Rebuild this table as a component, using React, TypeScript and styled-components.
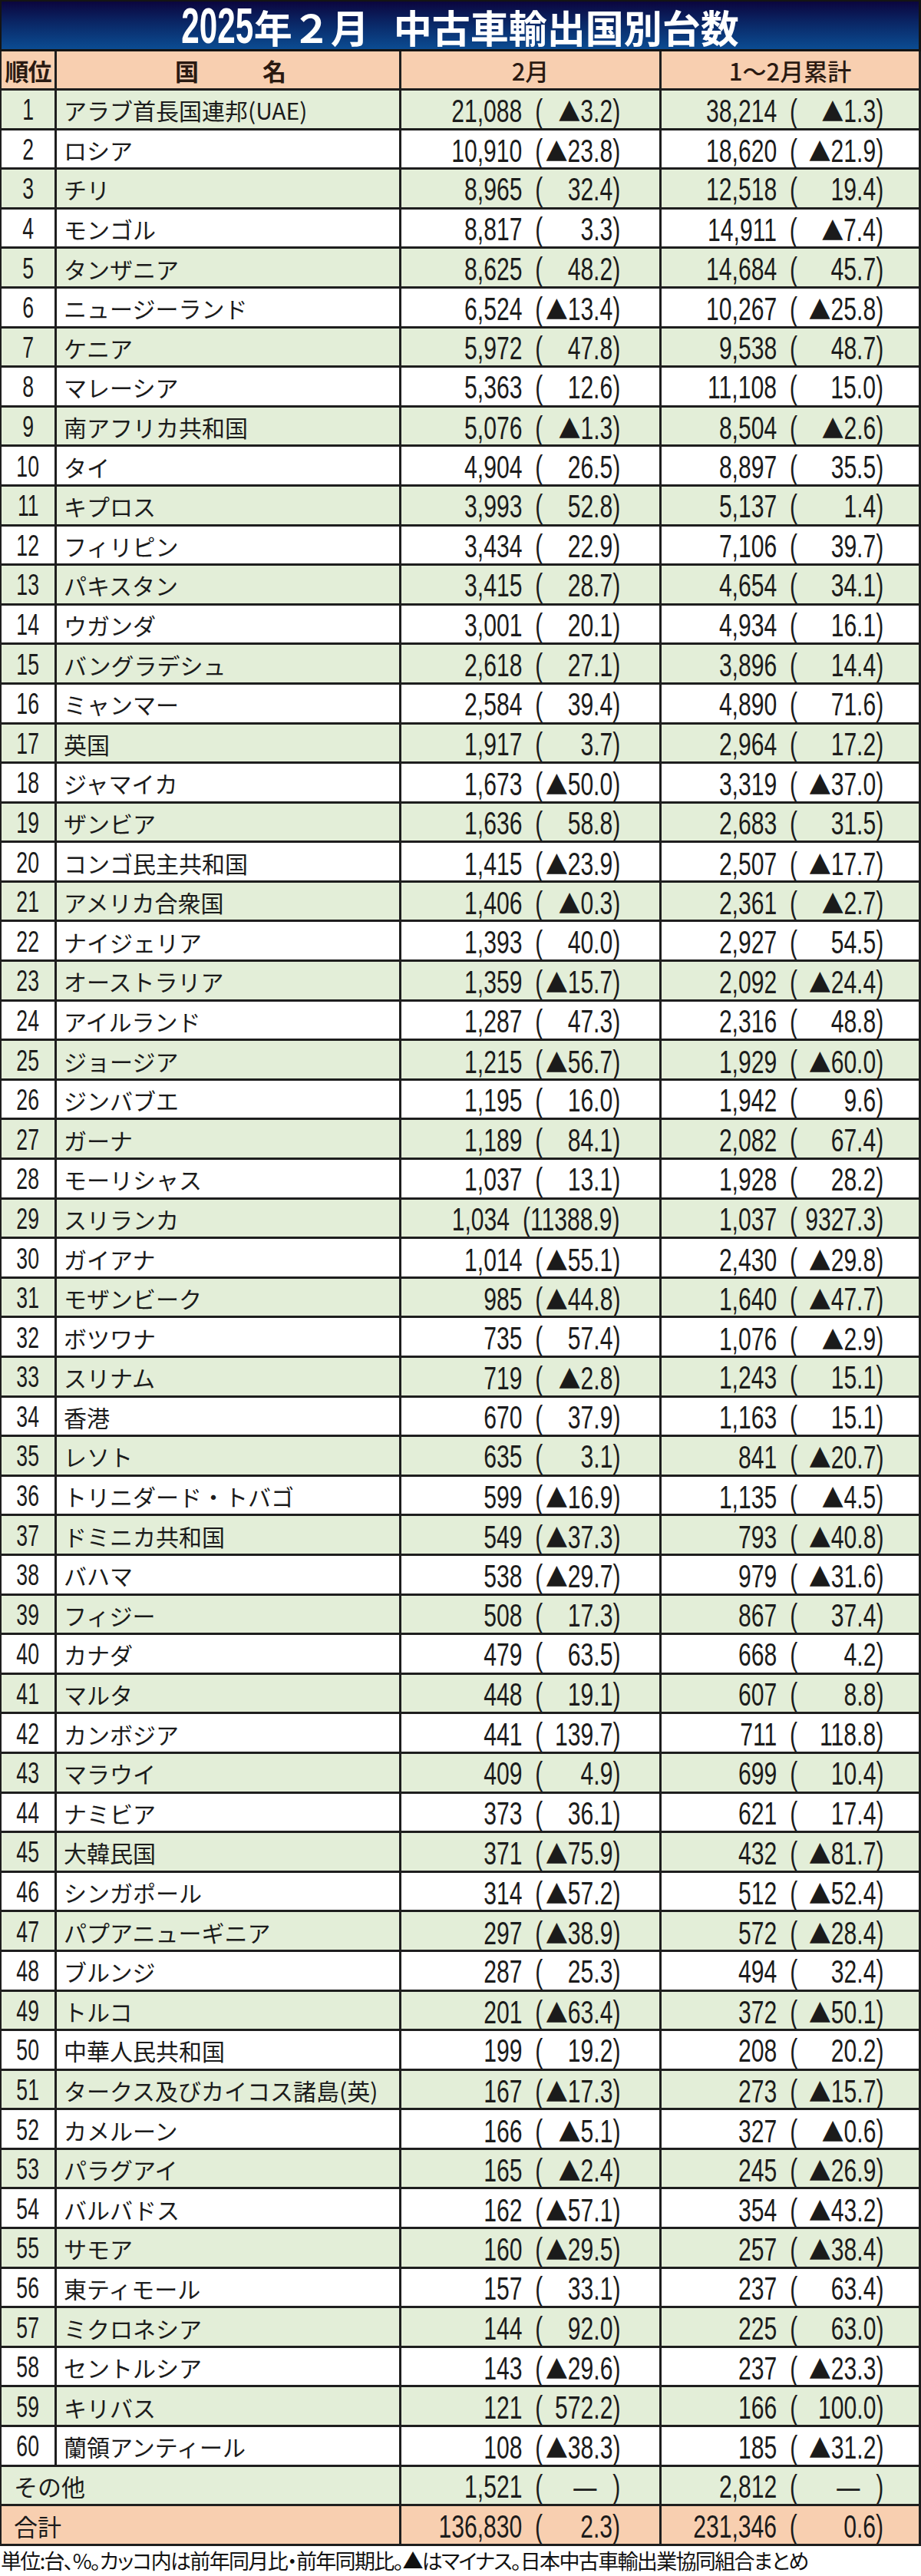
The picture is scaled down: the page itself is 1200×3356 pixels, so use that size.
import React from "react";
import styled, { createGlobalStyle } from "styled-components";

type Line = [string, string, string, string, string];

// name, 2月台数, 前年同月比, 1~2月累計, 前年同期比
const countries: Line[] = [
  ["アラブ首長国連邦(UAE)", "21,088", "▲3.2", "38,214", "▲1.3"],
  ["ロシア", "10,910", "▲23.8", "18,620", "▲21.9"],
  ["チリ", "8,965", "32.4", "12,518", "19.4"],
  ["モンゴル", "8,817", "3.3", "14,911", "▲7.4"],
  ["タンザニア", "8,625", "48.2", "14,684", "45.7"],
  ["ニュージーランド", "6,524", "▲13.4", "10,267", "▲25.8"],
  ["ケニア", "5,972", "47.8", "9,538", "48.7"],
  ["マレーシア", "5,363", "12.6", "11,108", "15.0"],
  ["南アフリカ共和国", "5,076", "▲1.3", "8,504", "▲2.6"],
  ["タイ", "4,904", "26.5", "8,897", "35.5"],
  ["キプロス", "3,993", "52.8", "5,137", "1.4"],
  ["フィリピン", "3,434", "22.9", "7,106", "39.7"],
  ["パキスタン", "3,415", "28.7", "4,654", "34.1"],
  ["ウガンダ", "3,001", "20.1", "4,934", "16.1"],
  ["バングラデシュ", "2,618", "27.1", "3,896", "14.4"],
  ["ミャンマー", "2,584", "39.4", "4,890", "71.6"],
  ["英国", "1,917", "3.7", "2,964", "17.2"],
  ["ジャマイカ", "1,673", "▲50.0", "3,319", "▲37.0"],
  ["ザンビア", "1,636", "58.8", "2,683", "31.5"],
  ["コンゴ民主共和国", "1,415", "▲23.9", "2,507", "▲17.7"],
  ["アメリカ合衆国", "1,406", "▲0.3", "2,361", "▲2.7"],
  ["ナイジェリア", "1,393", "40.0", "2,927", "54.5"],
  ["オーストラリア", "1,359", "▲15.7", "2,092", "▲24.4"],
  ["アイルランド", "1,287", "47.3", "2,316", "48.8"],
  ["ジョージア", "1,215", "▲56.7", "1,929", "▲60.0"],
  ["ジンバブエ", "1,195", "16.0", "1,942", "9.6"],
  ["ガーナ", "1,189", "84.1", "2,082", "67.4"],
  ["モーリシャス", "1,037", "13.1", "1,928", "28.2"],
  ["スリランカ", "1,034", "11388.9", "1,037", "9327.3"],
  ["ガイアナ", "1,014", "▲55.1", "2,430", "▲29.8"],
  ["モザンビーク", "985", "▲44.8", "1,640", "▲47.7"],
  ["ボツワナ", "735", "57.4", "1,076", "▲2.9"],
  ["スリナム", "719", "▲2.8", "1,243", "15.1"],
  ["香港", "670", "37.9", "1,163", "15.1"],
  ["レソト", "635", "3.1", "841", "▲20.7"],
  ["トリニダード・トバゴ", "599", "▲16.9", "1,135", "▲4.5"],
  ["ドミニカ共和国", "549", "▲37.3", "793", "▲40.8"],
  ["バハマ", "538", "▲29.7", "979", "▲31.6"],
  ["フィジー", "508", "17.3", "867", "37.4"],
  ["カナダ", "479", "63.5", "668", "4.2"],
  ["マルタ", "448", "19.1", "607", "8.8"],
  ["カンボジア", "441", "139.7", "711", "118.8"],
  ["マラウイ", "409", "4.9", "699", "10.4"],
  ["ナミビア", "373", "36.1", "621", "17.4"],
  ["大韓民国", "371", "▲75.9", "432", "▲81.7"],
  ["シンガポール", "314", "▲57.2", "512", "▲52.4"],
  ["パプアニューギニア", "297", "▲38.9", "572", "▲28.4"],
  ["ブルンジ", "287", "25.3", "494", "32.4"],
  ["トルコ", "201", "▲63.4", "372", "▲50.1"],
  ["中華人民共和国", "199", "19.2", "208", "20.2"],
  ["タークス及びカイコス諸島(英)", "167", "▲17.3", "273", "▲15.7"],
  ["カメルーン", "166", "▲5.1", "327", "▲0.6"],
  ["パラグアイ", "165", "▲2.4", "245", "▲26.9"],
  ["バルバドス", "162", "▲57.1", "354", "▲43.2"],
  ["サモア", "160", "▲29.5", "257", "▲38.4"],
  ["東ティモール", "157", "33.1", "237", "63.4"],
  ["ミクロネシア", "144", "92.0", "225", "63.0"],
  ["セントルシア", "143", "▲29.6", "237", "▲23.3"],
  ["キリバス", "121", "572.2", "166", "100.0"],
  ["蘭領アンティール", "108", "▲38.3", "185", "▲31.2"],
];

const others: Line = ["その他", "1,521", "—", "2,812", "—"];
const total: Line = ["合計", "136,830", "2.3", "231,346", "0.6"];

type Tone = "green" | "white" | "peach";

const toneColor: Record<Tone, string> = {
  green: "#e3eed8",
  white: "#ffffff",
  peach: "#f8cfb0",
};

const LINE = "#1e1e1e";
const COLS = "72px 449px 339px 338px";

const GlobalStyle = createGlobalStyle`
  html, body {
    margin: 0;
    padding: 0;
    background: #fff;
  }
  body {
    font-family: "Noto Sans CJK JP", "Noto Sans", sans-serif;
    color: #1b1b1b;
  }
`;

const Page = styled.div`
  width: 1200px;
`;

const TitleBar = styled.h1`
  margin: 0;
  height: 67px;
  box-sizing: border-box;
  border: 2px solid #141414;
  border-right-width: 3px;
  border-bottom-width: 3px;
  background: linear-gradient(180deg, #0b053e 0%, #0a2766 45%, #0b4c92 100%);
  display: flex;
  align-items: center;
  justify-content: center;
  color: #fff;
  font: 700 50px/1 "Noto Sans CJK JP", sans-serif;
  padding-top: 2px;
`;

const TitleYear = styled.span`
  display: inline-block;
  font-family: "Liberation Sans", sans-serif;
  font-size: 64px;
  transform: scaleX(0.66);
  margin: 0 -24px;
`;

const TitleGap = styled.span`
  display: inline-block;
  width: 32px;
`;

const Row = styled.div<{ $tone: Tone; $tall?: boolean }>`
  display: grid;
  grid-template-columns: ${COLS};
  height: ${(p) => (p.$tall ? "51px" : "51.6px")};
  box-sizing: border-box;
  border-left: 2px solid ${LINE};
  border-bottom: 3px solid ${LINE};
  background: ${(p) => toneColor[p.$tone]};
`;

const Cell = styled.div`
  display: flex;
  align-items: center;
  min-width: 0;
  box-sizing: border-box;
  border-right: 3px solid ${LINE};
  white-space: nowrap;
`;

const HeadCell = styled(Cell)<{ $bold?: boolean }>`
  justify-content: center;
  color: #2a1a12;
  font-size: 31px;
  font-weight: ${(p) => (p.$bold ? 700 : 500)};
  letter-spacing: ${(p) => (p.$bold ? "-1px" : "0")};
`;

const HeadSpread = styled(HeadCell)`
  gap: 84px;
  padding-left: 6px;
`;

const RankCell = styled(Cell)`
  justify-content: center;
`;

const RankNum = styled.span`
  display: inline-block;
  font: 400 38px/1 "Liberation Sans", sans-serif;
  transform: scaleX(0.7);
  padding-top: 2px;
`;

const NameCell = styled(Cell)`
  padding-left: 9px;
  font-size: 30px;
  padding-top: 2px;
`;

const LabelCell = styled(Cell)`
  grid-column: span 2;
  padding-left: 16px;
  font-size: 31px;
  padding-top: 2px;
`;

const ValueCell = styled(Cell)<{ $pad: number }>`
  justify-content: flex-end;
  padding-right: ${(p) => p.$pad}px;
`;

// the figures are set in a condensed face: squeeze Arial-width glyphs from the right edge
const Squeeze = styled.span`
  display: inline-flex;
  align-items: baseline;
  flex-shrink: 0;
  font: 400 43px/1 "Liberation Sans", sans-serif;
  transform: scaleX(0.7);
  transform-origin: right center;
  padding-top: 3px;
`;

const Num = styled.span`
  margin-right: 24px;
`;

const Slot = styled.span<{ $w: number; $dash?: boolean }>`
  display: inline-block;
  min-width: ${(p) => p.$w}px;
  text-align: right;
  padding-right: ${(p) => (p.$dash ? 30 : 0)}px;
  box-sizing: border-box;
`;

// the minus mark is a little flatter than a full-width triangle
const Tri = styled.span`
  display: inline-block;
  font-family: "Noto Sans CJK JP", sans-serif;
  font-size: 41px;
  line-height: 1;
  transform: scaleY(0.8);
  transform-origin: 50% 85%;
`;

const Footer = styled.p`
  margin: 0;
  height: 38.8px;
  padding-left: 1px;
  font-size: 27px;
  line-height: 38px;
  font-feature-settings: "palt";
  letter-spacing: -1.66px;
  white-space: nowrap;
  color: #111;
`;

const Pct = ({ v }: { v: string }) =>
  v.startsWith("▲") ? (
    <>
      <Tri>▲</Tri>
      {v.slice(1)}
    </>
  ) : (
    <>{v}</>
  );

const Value = ({ n, p, w, pad }: { n: string; p: string; w: number; pad: number }) => (
  <ValueCell $pad={pad}>
    <Squeeze>
      <Num>{n}</Num>
      <span>(</span>
      <Slot $w={w} $dash={p === "—"}>
        <Pct v={p} />
      </Slot>
      <span>)</span>
    </Squeeze>
  </ValueCell>
);

const Figures = ({ line }: { line: Line }) => (
  <>
    <Value n={line[1]} p={line[2]} w={130} pad={51} />
    <Value n={line[3]} p={line[4]} w={146} pad={46} />
  </>
);

export default function App() {
  return (
    <Page>
      <GlobalStyle />
      <TitleBar>
        <TitleYear>2025</TitleYear>年２月
        <TitleGap />
        中古車輸出国別台数
      </TitleBar>

      <Row $tone="peach" $tall>
        <HeadCell $bold>順位</HeadCell>
        <HeadSpread $bold>
          <span>国</span>
          <span>名</span>
        </HeadSpread>
        <HeadCell>2月</HeadCell>
        <HeadCell>1～2月累計</HeadCell>
      </Row>

      {countries.map((line, i) => (
        <Row key={line[0]} $tone={i % 2 === 0 ? "green" : "white"}>
          <RankCell>
            <RankNum>{i + 1}</RankNum>
          </RankCell>
          <NameCell>{line[0]}</NameCell>
          <Figures line={line} />
        </Row>
      ))}

      <Row $tone="green">
        <LabelCell>{others[0]}</LabelCell>
        <Figures line={others} />
      </Row>
      <Row $tone="peach">
        <LabelCell>{total[0]}</LabelCell>
        <Figures line={total} />
      </Row>

      <Footer>
        単位:台、%。カッコ内は前年同月比・前年同期比。▲はマイナス。日本中古車輸出業協同組合まとめ
      </Footer>
    </Page>
  );
}
